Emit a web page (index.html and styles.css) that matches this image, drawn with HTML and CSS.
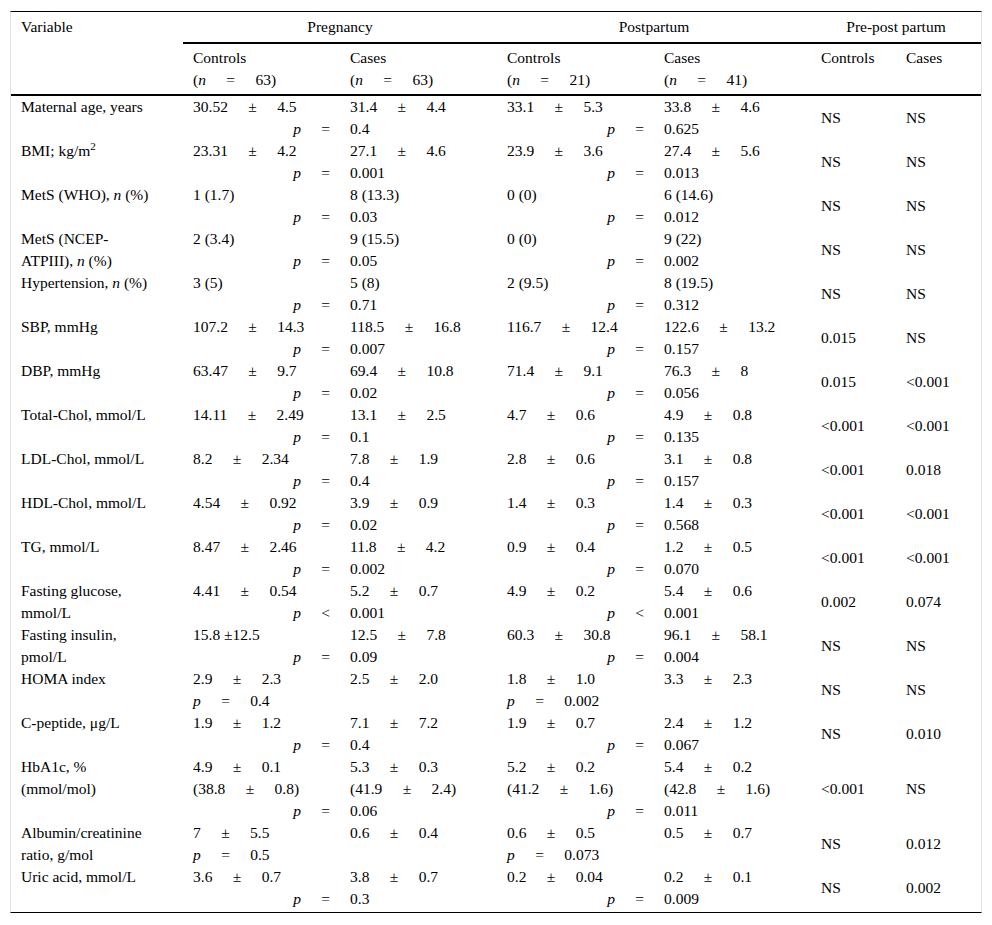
FILE: index.html
```html
<!DOCTYPE html>
<html lang="en">
<head>
<meta charset="utf-8">
<title>Maternal characteristics: pregnancy and postpartum</title>
<link rel="stylesheet" href="styles.css">
</head>
<body>
<div class="table-wrap">
<table class="data">
<colgroup>
<col class="c-var"><col class="c-grp"><col class="c-grp"><col class="c-grp"><col class="c-grp"><col class="c-pp"><col class="c-pp">
</colgroup>
<thead>
<tr class="h1">
<th rowspan="2" class="var-h">Variable</th>
<th colspan="2" class="grp">Pregnancy</th>
<th colspan="2" class="grp">Postpartum</th>
<th colspan="2" class="grp">Pre-post partum</th>
</tr>
<tr class="h2">
<th>Controls<br><span class="ws">(<i>n</i> = 63)</span></th>
<th>Cases<br><span class="ws">(<i>n</i> = 63)</span></th>
<th>Controls<br><span class="ws">(<i>n</i> = 21)</span></th>
<th>Cases<br><span class="ws">(<i>n</i> = 41)</span></th>
<th>Controls</th>
<th>Cases</th>
</tr>
</thead>
<tbody>
<tr>
<td class="var">Maternal age, years</td>
<td><div class="ws">30.52 ± 4.5</div><div class="plab ws"><i>p</i> =</div></td>
<td><div class="ws">31.4 ± 4.4</div><div>0.4</div></td>
<td><div class="ws">33.1 ± 5.3</div><div class="plab ws"><i>p</i> =</div></td>
<td><div class="ws">33.8 ± 4.6</div><div>0.625</div></td>
<td class="ns">NS</td><td class="ns">NS</td>
</tr>
<tr>
<td class="var">BMI; kg/m<sup>2</sup></td>
<td><div class="ws">23.31 ± 4.2</div><div class="plab ws"><i>p</i> =</div></td>
<td><div class="ws">27.1 ± 4.6</div><div>0.001</div></td>
<td><div class="ws">23.9 ± 3.6</div><div class="plab ws"><i>p</i> =</div></td>
<td><div class="ws">27.4 ± 5.6</div><div>0.013</div></td>
<td class="ns">NS</td><td class="ns">NS</td>
</tr>
<tr>
<td class="var">MetS (WHO), <i>n</i> (%)</td>
<td><div>1 (1.7)</div><div class="plab ws"><i>p</i> =</div></td>
<td><div>8 (13.3)</div><div>0.03</div></td>
<td><div>0 (0)</div><div class="plab ws"><i>p</i> =</div></td>
<td><div>6 (14.6)</div><div>0.012</div></td>
<td class="ns">NS</td><td class="ns">NS</td>
</tr>
<tr>
<td class="var">MetS (NCEP-<br>ATPIII), <i>n</i> (%)</td>
<td><div>2 (3.4)</div><div class="plab ws"><i>p</i> =</div></td>
<td><div>9 (15.5)</div><div>0.05</div></td>
<td><div>0 (0)</div><div class="plab ws"><i>p</i> =</div></td>
<td><div>9 (22)</div><div>0.002</div></td>
<td class="ns">NS</td><td class="ns">NS</td>
</tr>
<tr>
<td class="var">Hypertension, <i>n</i> (%)</td>
<td><div>3 (5)</div><div class="plab ws"><i>p</i> =</div></td>
<td><div>5 (8)</div><div>0.71</div></td>
<td><div>2 (9.5)</div><div class="plab ws"><i>p</i> =</div></td>
<td><div>8 (19.5)</div><div>0.312</div></td>
<td class="ns">NS</td><td class="ns">NS</td>
</tr>
<tr>
<td class="var">SBP, mmHg</td>
<td><div class="ws">107.2 ± 14.3</div><div class="plab ws"><i>p</i> =</div></td>
<td><div class="ws">118.5 ± 16.8</div><div>0.007</div></td>
<td><div class="ws">116.7 ± 12.4</div><div class="plab ws"><i>p</i> =</div></td>
<td><div class="ws">122.6 ± 13.2</div><div>0.157</div></td>
<td class="ns">0.015</td><td class="ns">NS</td>
</tr>
<tr>
<td class="var">DBP, mmHg</td>
<td><div class="ws">63.47 ± 9.7</div><div class="plab ws"><i>p</i> =</div></td>
<td><div class="ws">69.4 ± 10.8</div><div>0.02</div></td>
<td><div class="ws">71.4 ± 9.1</div><div class="plab ws"><i>p</i> =</div></td>
<td><div class="ws">76.3 ± 8</div><div>0.056</div></td>
<td class="ns">0.015</td><td class="ns">&lt;0.001</td>
</tr>
<tr>
<td class="var">Total-Chol, mmol/L</td>
<td><div class="ws">14.11 ± 2.49</div><div class="plab ws"><i>p</i> =</div></td>
<td><div class="ws">13.1 ± 2.5</div><div>0.1</div></td>
<td><div class="ws">4.7 ± 0.6</div><div class="plab ws"><i>p</i> =</div></td>
<td><div class="ws">4.9 ± 0.8</div><div>0.135</div></td>
<td class="ns">&lt;0.001</td><td class="ns">&lt;0.001</td>
</tr>
<tr>
<td class="var">LDL-Chol, mmol/L</td>
<td><div class="ws">8.2 ± 2.34</div><div class="plab ws"><i>p</i> =</div></td>
<td><div class="ws">7.8 ± 1.9</div><div>0.4</div></td>
<td><div class="ws">2.8 ± 0.6</div><div class="plab ws"><i>p</i> =</div></td>
<td><div class="ws">3.1 ± 0.8</div><div>0.157</div></td>
<td class="ns">&lt;0.001</td><td class="ns">0.018</td>
</tr>
<tr>
<td class="var">HDL-Chol, mmol/L</td>
<td><div class="ws">4.54 ± 0.92</div><div class="plab ws"><i>p</i> =</div></td>
<td><div class="ws">3.9 ± 0.9</div><div>0.02</div></td>
<td><div class="ws">1.4 ± 0.3</div><div class="plab ws"><i>p</i> =</div></td>
<td><div class="ws">1.4 ± 0.3</div><div>0.568</div></td>
<td class="ns">&lt;0.001</td><td class="ns">&lt;0.001</td>
</tr>
<tr>
<td class="var">TG, mmol/L</td>
<td><div class="ws">8.47 ± 2.46</div><div class="plab ws"><i>p</i> =</div></td>
<td><div class="ws">11.8 ± 4.2</div><div>0.002</div></td>
<td><div class="ws">0.9 ± 0.4</div><div class="plab ws"><i>p</i> =</div></td>
<td><div class="ws">1.2 ± 0.5</div><div>0.070</div></td>
<td class="ns">&lt;0.001</td><td class="ns">&lt;0.001</td>
</tr>
<tr>
<td class="var">Fasting glucose,<br>mmol/L</td>
<td><div class="ws">4.41 ± 0.54</div><div class="plab ws"><i>p</i> &lt;</div></td>
<td><div class="ws">5.2 ± 0.7</div><div>0.001</div></td>
<td><div class="ws">4.9 ± 0.2</div><div class="plab ws"><i>p</i> &lt;</div></td>
<td><div class="ws">5.4 ± 0.6</div><div>0.001</div></td>
<td class="ns">0.002</td><td class="ns">0.074</td>
</tr>
<tr>
<td class="var">Fasting insulin,<br>pmol/L</td>
<td><div>15.8 ±12.5</div><div class="plab ws"><i>p</i> =</div></td>
<td><div class="ws">12.5 ± 7.8</div><div>0.09</div></td>
<td><div class="ws">60.3 ± 30.8</div><div class="plab ws"><i>p</i> =</div></td>
<td><div class="ws">96.1 ± 58.1</div><div>0.004</div></td>
<td class="ns">NS</td><td class="ns">NS</td>
</tr>
<tr>
<td class="var">HOMA index</td>
<td><div class="ws">2.9 ± 2.3</div><div class="ws"><i>p</i> = 0.4</div></td>
<td><div class="ws">2.5 ± 2.0</div></td>
<td><div class="ws">1.8 ± 1.0</div><div class="ws"><i>p</i> = 0.002</div></td>
<td><div class="ws">3.3 ± 2.3</div></td>
<td class="ns">NS</td><td class="ns">NS</td>
</tr>
<tr>
<td class="var">C-peptide, μg/L</td>
<td><div class="ws">1.9 ± 1.2</div><div class="plab ws"><i>p</i> =</div></td>
<td><div class="ws">7.1 ± 7.2</div><div>0.4</div></td>
<td><div class="ws">1.9 ± 0.7</div><div class="plab ws"><i>p</i> =</div></td>
<td><div class="ws">2.4 ± 1.2</div><div>0.067</div></td>
<td class="ns">NS</td><td class="ns">0.010</td>
</tr>
<tr>
<td class="var">HbA1c, %<br>(mmol/mol)</td>
<td><div class="ws">4.9 ± 0.1</div><div class="ws">(38.8 ± 0.8)</div><div class="plab ws"><i>p</i> =</div></td>
<td><div class="ws">5.3 ± 0.3</div><div class="ws">(41.9 ± 2.4)</div><div>0.06</div></td>
<td><div class="ws">5.2 ± 0.2</div><div class="ws">(41.2 ± 1.6)</div><div class="plab ws"><i>p</i> =</div></td>
<td><div class="ws">5.4 ± 0.2</div><div class="ws">(42.8 ± 1.6)</div><div>0.011</div></td>
<td class="ns">&lt;0.001</td><td class="ns">NS</td>
</tr>
<tr>
<td class="var">Albumin/creatinine<br>ratio, g/mol</td>
<td><div class="ws">7 ± 5.5</div><div class="ws"><i>p</i> = 0.5</div></td>
<td><div class="ws">0.6 ± 0.4</div></td>
<td><div class="ws">0.6 ± 0.5</div><div class="ws"><i>p</i> = 0.073</div></td>
<td><div class="ws">0.5 ± 0.7</div></td>
<td class="ns">NS</td><td class="ns">0.012</td>
</tr>
<tr>
<td class="var">Uric acid, mmol/L</td>
<td><div class="ws">3.6 ± 0.7</div><div class="plab ws"><i>p</i> =</div></td>
<td><div class="ws">3.8 ± 0.7</div><div>0.3</div></td>
<td><div class="ws">0.2 ± 0.04</div><div class="plab ws"><i>p</i> =</div></td>
<td><div class="ws">0.2 ± 0.1</div><div>0.009</div></td>
<td class="ns">NS</td><td class="ns">0.002</td>
</tr>
</tbody>
</table>
</div>
</body>
</html>
```

FILE: styles.css
```css
* {
  box-sizing: border-box;
}

html,
body {
  margin: 0;
  padding: 0;
  background: #ffffff;
}

body {
  padding: 11px 10px 0 10px;
  font-family: "Liberation Serif", "Times New Roman", serif;
  font-size: 15.5px;
  color: #000000;
}

.table-wrap {
  width: 972px;
  border-top: 1px solid #000000;
  border-bottom: 1px solid #000000;
  border-left: 1px solid #e3e3e3;
  border-right: 1px solid #e3e3e3;
  padding-bottom: 2px;
}

.data {
  width: 970px;
  table-layout: fixed;
  border-collapse: separate;
  border-spacing: 0;
  line-height: 22px;
}

.c-var {
  width: 172px;
}

.c-grp {
  width: 157px;
}

.c-pp {
  width: 85px;
}

th,
td {
  padding: 0 10px;
  text-align: left;
  vertical-align: top;
  font-weight: normal;
  white-space: nowrap;
}

.h1 th {
  padding-top: 4px;
  padding-bottom: 4px;
}

.h1 .grp {
  text-align: center;
  border-bottom: 2px solid #000000;
}

.var-h {
  border-bottom: 2px solid #000000;
}

.h2 th {
  padding-top: 3px;
  padding-bottom: 3px;
  border-bottom: 2px solid #000000;
}

.ws {
  word-spacing: 16.5px;
}

.plab {
  text-align: right;
}

td.ns {
  vertical-align: middle;
}

sup {
  font-size: 0.72em;
  line-height: 0;
  vertical-align: 0.5em;
}
```
